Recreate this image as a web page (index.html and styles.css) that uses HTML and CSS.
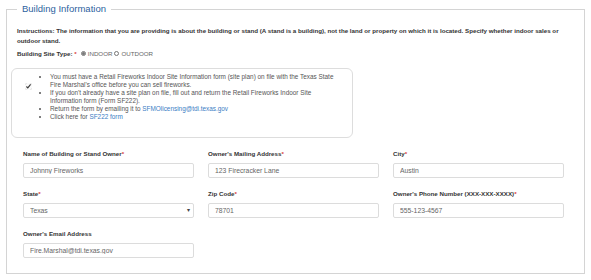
FILE: index.html
```html
<!DOCTYPE html>
<html>
<head>
	<meta charset="UTF-8">
	<title>Building Information</title>
	<link rel="stylesheet" href="styles.css">
</head>
<body>
	<fieldset class="section">
		<legend>Building Information</legend>
		<p class="instructions">Instructions: The information that you are providing is about the building or stand (A stand is a building), not the land or property on which it is located. Specify whether indoor sales or outdoor stand.</p>
		<div class="site-type">
			<span class="site-label">Building Site Type: <span class="req">*</span></span>
			<input type="radio" name="sitetype" id="indoor" checked>
			<label for="indoor">INDOOR</label>
			<input type="radio" name="sitetype" id="outdoor">
			<label for="outdoor">OUTDOOR</label>
		</div>
		<div class="notice">
			<input type="checkbox" class="notice-check" checked>
			<ul>
				<li>You must have a Retail Fireworks Indoor Site Information form (site plan) on file with the Texas State Fire Marshal's office before you can sell fireworks.</li>
				<li>If you don't already have a site plan on file, fill out and return the Retail Fireworks Indoor Site Information form (Form SF222).</li>
				<li>Return the form by emailing it to <a href="#">SFMOlicensing@tdi.texas.gov</a></li>
				<li>Click here for <a href="#">SF222 form</a></li>
			</ul>
		</div>
		<div class="fields">
			<div class="field">
				<label for="owner">Name of Building or Stand Owner<span class="req">*</span></label>
				<input type="text" id="owner" value="Johnny Fireworks">
			</div>
			<div class="field">
				<label for="address">Owner's Mailing Address<span class="req">*</span></label>
				<input type="text" id="address" value="123 Firecracker Lane">
			</div>
			<div class="field">
				<label for="city">City<span class="req">*</span></label>
				<input type="text" id="city" value="Austin">
			</div>
			<div class="field">
				<label for="state">State<span class="req">*</span></label>
				<div class="select-wrap">
					<select id="state">
						<option>Texas</option>
					</select>
				</div>
			</div>
			<div class="field">
				<label for="zip">Zip Code<span class="req">*</span></label>
				<input type="text" id="zip" value="78701">
			</div>
			<div class="field">
				<label for="phone">Owner's Phone Number (XXX-XXX-XXXX)<span class="req">*</span></label>
				<input type="text" id="phone" value="555-123-4567">
			</div>
			<div class="field">
				<label for="email">Owner's Email Address</label>
				<input type="text" id="email" value="Fire.Marshal@tdi.texas.gov">
			</div>
		</div>
	</fieldset>
</body>
</html>
```
FILE: styles.css
```css
body {
	margin: 0;
	background-color: #fff;
	font-family: "Liberation Sans", Arial, sans-serif;
	color: #333;
}
.section {
	margin: 0 6px 0 6px;
	padding: 8px 10px 15px 10px;
	border: 1px solid #d4d4d4;
	min-width: 0;
}
.section legend {
	padding: 0 5px;
	font-size: 9.5px;
	line-height: 18px;
	color: #2d5f9e;
}
.instructions {
	margin: 0;
	font-size: 6.2px;
	line-height: 10px;
	font-weight: bold;
}
.site-type {
	display: flex;
	align-items: center;
	margin-top: 2px;
	height: 10px;
	font-size: 6.2px;
}
.site-label {
	font-weight: bold;
	margin-right: 4px;
}
.site-type label {
	color: #666;
	margin-right: 2px;
}
.site-type input {
	width: 5px;
	height: 5px;
	margin: 0 2px 0 0;
	accent-color: #777;
}
.req {
	color: #d9413a;
	font-weight: bold;
}
.notice {
	display: flex;
	align-items: flex-start;
	width: 342px;
	box-sizing: border-box;
	margin: 10px 0 0 -6px;
	padding: 4px 8px 16px 13px;
	border: 1px solid #ddd;
	border-radius: 6px;
}
.notice-check {
	width: 7px;
	height: 7px;
	margin: 10px 0 0 0;
	flex-shrink: 0;
	accent-color: #fafafa;
}
.notice ul {
	margin: 0;
	padding-left: 18px;
	font-size: 6.4px;
	line-height: 8px;
	color: #555;
}
.notice a {
	color: #3a7cc4;
	text-decoration: none;
}
.fields {
	display: grid;
	grid-template-columns: repeat(3, 171px);
	column-gap: 14px;
	row-gap: 11px;
	margin-top: 11px;
	padding-left: 6px;
}
.field label {
	display: block;
	font-size: 6.2px;
	line-height: 10px;
	font-weight: bold;
	margin-bottom: 4px;
}
.field input, .field select {
	display: block;
	width: 100%;
	height: 15px;
	box-sizing: border-box;
	margin: 0;
	padding: 0 6px;
	border: 1px solid #dcdcdc;
	border-radius: 2px;
	font-family: "Liberation Sans", Arial, sans-serif;
	font-size: 6.8px;
	color: #666;
	background: #fff;
}
.field select {
	appearance: none;
	-webkit-appearance: none;
}
.select-wrap {
	position: relative;
}
.select-wrap::after {
	content: "\25BE";
	position: absolute;
	right: 4px;
	top: 3px;
	font-size: 6px;
	color: #444;
	pointer-events: none;
}
```
